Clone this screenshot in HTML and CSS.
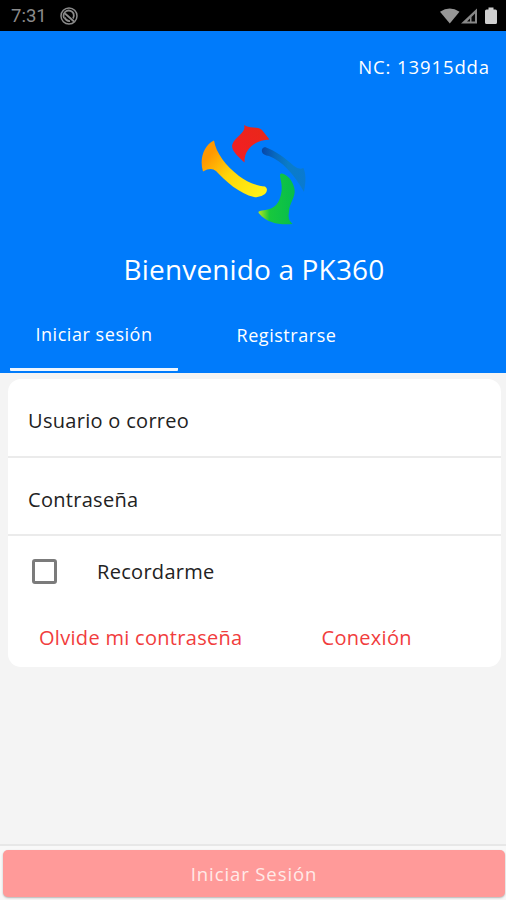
FILE: index.html
```html
<!DOCTYPE html>
<html lang="es">
<head>
<meta charset="utf-8">
<title>PK360</title>
<link rel="stylesheet" href="styles.css">
</head>
<body>
<div class="statusbar">
  <span class="time">7:31</span>
  <svg class="sync" viewBox="0 0 20 20" width="20" height="20"><circle cx="10" cy="10" r="8" fill="none" stroke="#8b8b8b" stroke-width="1.5"/><path d="M5 12a5.200 5.200 0 0 1 9.500-4.500q1 3-.5 5" fill="none" stroke="#8b8b8b" stroke-width="1.800"/><path d="M6 7.500l9 8M5.500 11.500q2 4 5.500 3.500" fill="none" stroke="#8b8b8b" stroke-width="1.800"/></svg>
  <svg class="signals" viewBox="0 0 60 20" width="60" height="20">
    <path d="M0 5.800Q9.800 -1 19.500 5.800L9.800 17.500Z" fill="#969696"/>
    <path d="M21 17.500L37 2.500V17.500Z" fill="#888"/><path d="M27 15.500L30 12.500V15.500ZM31.500 11L35 7.500V15.500H31.500Z" fill="#080808"/>
    <path d="M48.500 1.500h5v2h2q1.500 0 1.500 1.500v11.500q0 1.500-1.500 1.500h-9q-1.500 0-1.500-1.500V5q0-1.500 1.500-1.500h2z" fill="#cfcfcf"/>
  </svg>
</div>
<header class="hero">
  <div class="code">NC: 13915dda</div>
  <svg class="logo" viewBox="190 115 130 120" width="130" height="120">
    <defs>
      <linearGradient id="y" x1="0" y1="0" x2="1" y2=".8"><stop offset=".2" stop-color="#ff9800"/><stop offset=".55" stop-color="#ffd60a"/><stop offset="1" stop-color="#fff016"/></linearGradient>
      <linearGradient id="g"><stop offset="0" stop-color="#b7e51e"/><stop offset=".3" stop-color="#18c83c"/><stop offset="1" stop-color="#06bd4c"/></linearGradient>
      <linearGradient id="b"><stop offset="0" stop-color="#0747a8"/><stop offset=".3" stop-color="#0868bd"/><stop offset=".6" stop-color="#0a7cc8"/><stop offset="1" stop-color="#0a7ad0"/></linearGradient>
      <linearGradient id="r" x1="0" y1="1" x2="1" y2="0"><stop offset="0" stop-color="#f51d25"/><stop offset="1" stop-color="#e72918"/></linearGradient>
    </defs>
    <path d="M214 140.500C216 153 226 166 239 176C247 182 257 186 265 186.500Q269 189 265 194Q260 198 254 197C240 194 225 181 216 171Q211 167 203 171.500C199 159 204 145 214 140.500Z" fill="url(#y)"/>
    <path d="M244 125C251 129 257 126 262 130L269.500 139.500C256 140 244 148 244.500 162.500C239 157 230 150 232.500 144C235 137 247 132 244 125Z" fill="url(#r)"/>
    <path d="M265 147Q261 148 262 152Q263 155 269 156C282 161 294 174 304 192C305 185 307 177 303.500 168Q299 170 294 166C285 158 276 151 265 147Z" fill="url(#b)"/>
    <path d="M282 173.500C288 175 293 181 294.500 189C296 197 289 203 289 212Q287 219 292.500 224C281 225 268 224 259 213.500Q257 211 262 210.500C272 210 278 205 280 198C284 187 280 180 280 175Q280 173 282 173.500Z" fill="url(#g)"/>
  </svg>
  <h1 class="title">Bienvenido a PK360</h1>
  <nav class="tabs">
    <a class="tab active">Iniciar sesión</a>
    <a class="tab">Registrarse</a>
  </nav>
</header>
<main class="card">
  <div class="field">Usuario o correo</div>
  <div class="field">Contraseña</div>
  <label class="remember"><span class="box"></span><span>Recordarme</span></label>
  <div class="links"><a>Olvide mi contraseña</a><a>Conexión</a></div>
</main>
<footer class="footer"><div class="submit">Iniciar Sesión</div></footer>
</body>
</html>
```
FILE: styles.css
```css
* { box-sizing: border-box; }
body { margin: 0; width: 506px; height: 900px; overflow: hidden; display: flex; flex-direction: column; background: #f4f4f4; font-family: "Open Sans", sans-serif; color: #222; }
.statusbar { height: 31px; flex: none; background: #000; display: flex; align-items: center; padding: 1px 6px 0 11px; }
.time { font: 18.5px/24px Roboto, sans-serif; color: #8b8b8b; width: 48px; }
.signals { margin-left: auto; }
.hero { height: 342px; flex: none; background: #007bfb; color: #fff; display: flex; flex-direction: column; align-items: center; }
.code { align-self: flex-end; margin: 23px 16px 0 0; font-size: 18.5px; line-height: 26px; letter-spacing: .9px; white-space: nowrap; }
.logo { margin: 35px 0 0 3px; flex: none; }
.title { margin: 14px 0 0 2px; font-size: 28px; font-weight: 400; line-height: 40px; letter-spacing: .15px; white-space: nowrap; }
.tabs { align-self: stretch; margin: 21px 0 0 10px; display: flex; height: 62px; gap: 24px; }
.tab { width: 168px; height: 61px; padding-top: 11px; font-size: 18px; line-height: 26px; text-align: center; letter-spacing: .55px; white-space: nowrap; }
.tab + .tab { padding: 12px 0 0 1px; }
.active { border-bottom: 3px solid #eef6ff; border-radius: 1px; }
.card { margin: 6px 5px 0 8px; height: 288px; flex: none; background: #fff; border-radius: 13px; font-size: 20px; line-height: 28px; letter-spacing: .3px; }
.field { height: 78.5px; padding: 28px 20px 0; border-bottom: 2px solid #ebebeb; }
.remember { display: flex; align-items: center; height: 71px; padding-left: 24px; }
.box { width: 25px; height: 25px; border: 3px solid #7b7b7b; border-radius: 3px; margin-right: 40px; }
.links { display: flex; gap: 79px; padding: 17px 0 0 31px; color: #f13d3d; white-space: nowrap; }
.footer { margin-top: auto; height: 56px; flex: none; border-top: 2px solid #e7e7e7; background: #f8f8f8; padding: 4px 1px 0 3px; }
.submit { height: 47px; border-radius: 5px; background: #ff9a99; box-shadow: 0 1px 2px #b5b5b5; color: #ffeae8; text-align: center; font-size: 18.5px; line-height: 47px; letter-spacing: .9px; }
```
